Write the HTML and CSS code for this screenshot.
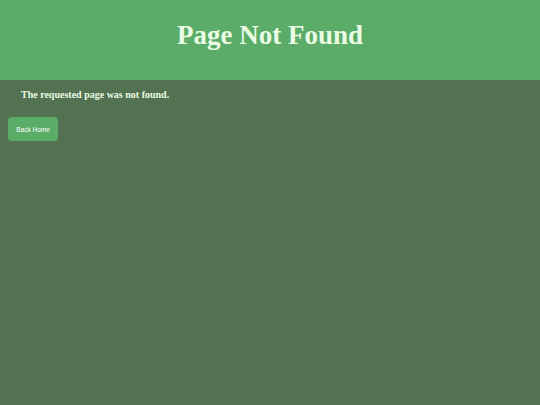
FILE: index.html
```html
<!DOCTYPE html>
<html>
<head>
<meta charset="utf-8">
<link rel="stylesheet" href="styles.css">
</head>
<body>
<header class="hero">
<h1 class="title">Page Not Found</h1>
</header>
<main class="content">
<p class="message">The requested page was not found.</p>
<a class="btn" href="#">Back Home</a>
</main>
</body>
</html>
```
FILE: styles.css
```css
html, body {
  margin: 0;
  padding: 0;
  height: 100%;
}
body {
  background: #527252;
  font-family: "Liberation Serif", "Times New Roman", serif;
  color: #eafbe4;
}
.hero {
  background: #5bac68;
  height: 80px;
  display: flex;
  align-items: center;
  justify-content: center;
}
.title {
  margin: 0;
  font-size: 27px;
  font-weight: bold;
  color: #eafbe4;
  padding-bottom: 10px;
}
.content {
  padding: 8px 8px;
}
.message {
  margin: 0 0 0 13px;
  font-size: 10px;
  font-weight: bold;
  line-height: 13px;
}
.btn {
  display: inline-flex;
  align-items: center;
  justify-content: center;
  margin-top: 16px;
  width: 50px;
  height: 24px;
  background: #5aac67;
  border-radius: 4px;
  color: #ffffff;
  font-family: "Liberation Sans", Arial, sans-serif;
  font-size: 6.5px;
  text-decoration: none;
}
```
